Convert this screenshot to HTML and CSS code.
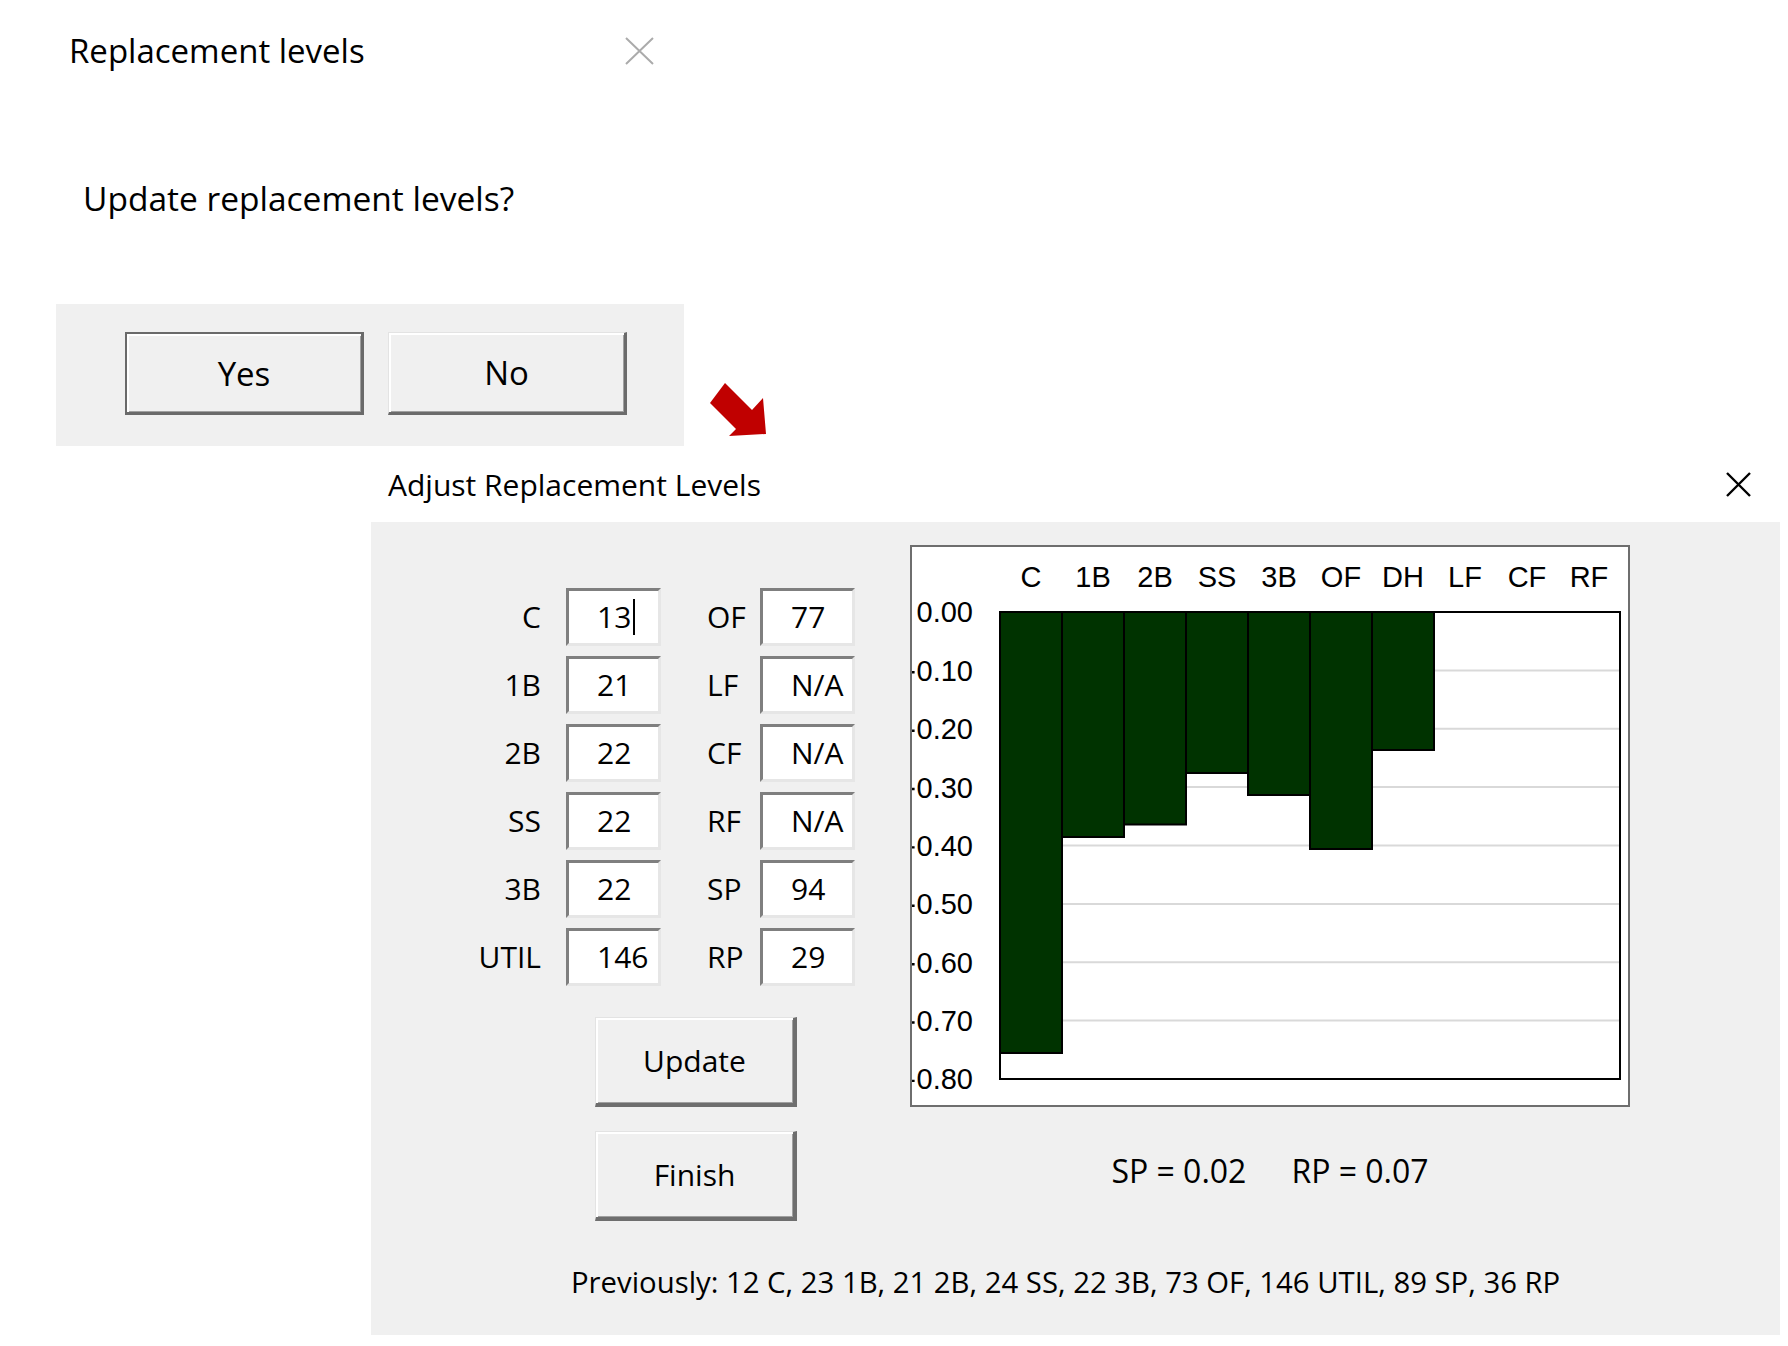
FILE: index.html
```html
<!DOCTYPE html>
<html lang="en">
<head>
<meta charset="utf-8">
<title>Replacement levels</title>
<link rel="stylesheet" href="styles.css">
</head>
<body>
<section class="msgbox">
  <div class="msg-title">
    <span>Replacement levels</span>
    <svg class="close close-light" width="29" height="28" viewBox="0 0 29 28"><path d="M1 1L28 27M28 1L1 27"/></svg>
  </div>
  <p class="msg-text">Update replacement levels?</p>
  <div class="msg-buttons">
    <button class="btn btn-msg btn-default">Yes</button>
    <button class="btn btn-msg">No</button>
  </div>
</section>

<svg class="arrow" width="64" height="60" viewBox="0 0 64 60"><polygon points="19,3 46,30 57,18 60,54 23,56 30,49 4,23"/></svg>

<section class="adjust">
  <div class="adj-title">
    <span>Adjust Replacement Levels</span>
    <svg class="close close-dark" width="25" height="25" viewBox="0 0 25 25"><path d="M1 1L24 24M24 1L1 24"/></svg>
  </div>
  <div class="adj-body">
    <div class="adj-main">
      <div class="left">
        <div class="form">
          <span class="lbl">C</span><span class="field">13<i class="caret"></i></span><span class="lbl lbl2">OF</span><span class="field">77</span>
          <span class="lbl">1B</span><span class="field">21</span><span class="lbl lbl2">LF</span><span class="field">N/A</span>
          <span class="lbl">2B</span><span class="field">22</span><span class="lbl lbl2">CF</span><span class="field">N/A</span>
          <span class="lbl">SS</span><span class="field">22</span><span class="lbl lbl2">RF</span><span class="field">N/A</span>
          <span class="lbl">3B</span><span class="field">22</span><span class="lbl lbl2">SP</span><span class="field">94</span>
          <span class="lbl">UTIL</span><span class="field">146</span><span class="lbl lbl2">RP</span><span class="field">29</span>
        </div>
        <div class="actions">
          <button class="btn btn-act">Update</button>
          <button class="btn btn-act">Finish</button>
        </div>
      </div>
      <div class="right">
        <div class="chart">
          <svg class="plot" width="716" height="558" viewBox="0 0 716 558">
            <g class="col-labels">
              <text x="119" y="40">C</text>
              <text x="181" y="40">1B</text>
              <text x="243" y="40">2B</text>
              <text x="305" y="40">SS</text>
              <text x="367" y="40">3B</text>
              <text x="429" y="40">OF</text>
              <text x="491" y="40">DH</text>
              <text x="553" y="40">LF</text>
              <text x="615" y="40">CF</text>
              <text x="677" y="40">RF</text>
            </g>
            <g class="y-labels">
              <text x="61" y="75.4">0.00</text>
              <text x="61" y="133.8">0.10</text>
              <text x="61" y="192.2">0.20</text>
              <text x="61" y="250.5">0.30</text>
              <text x="61" y="308.9">0.40</text>
              <text x="61" y="367.3">0.50</text>
              <text x="61" y="425.7">0.60</text>
              <text x="61" y="484">0.70</text>
              <text x="61" y="542.4">0.80</text>
            </g>
            <path class="minus" d="M0 125.3H2.6M0 183.7H2.6M0 242H2.6M0 300.4H2.6M0 358.8H2.6M0 417.2H2.6M0 475.5H2.6M0 533.9H2.6"/>
            <rect class="plot-bg" x="88" y="65" width="620" height="467"/>
            <path class="grid" d="M88 123.4H708M88 181.75H708M88 240.1H708M88 298.5H708M88 356.9H708M88 415.25H708M88 473.6H708"/>
            <rect class="plot-frame" x="88" y="65" width="620" height="467"/>
            <rect class="bar" x="88" y="65" width="62" height="441"/>
            <rect class="bar" x="150" y="65" width="62" height="225"/>
            <rect class="bar" x="212" y="65" width="62" height="212.5"/>
            <rect class="bar" x="274" y="65" width="62" height="161"/>
            <rect class="bar" x="336" y="65" width="62" height="183"/>
            <rect class="bar" x="398" y="65" width="62" height="237"/>
            <rect class="bar" x="460" y="65" width="62" height="138"/>
          </svg>
        </div>
        <p class="ratios"><span>SP = 0.02</span><span>RP = 0.07</span></p>
      </div>
    </div>
    <p class="previously">Previously: 12 C, 23 1B, 21 2B, 24 SS, 22 3B, 73 OF, 146 UTIL, 89 SP, 36 RP</p>
  </div>
</section>
</body>
</html>
```

FILE: styles.css
```css
* {
  box-sizing: border-box;
  margin: 0;
  padding: 0;
}

html,
body {
  background: #fff;
}

body {
  width: 1788px;
  height: 1346px;
  overflow: hidden;
  position: relative;
  font-family: "Open Sans", "Noto Sans", sans-serif;
  color: #000;
}

/* ---------- message box ---------- */
.msgbox {
  margin-left: 56px;
  width: 628px;
}

.msg-title {
  display: flex;
  align-items: center;
  justify-content: space-between;
  margin-top: 28px;
  height: 45px;
  padding: 0 30px 0 13px;
  font-size: 33px;
  line-height: 45px;
}

.close {
  display: block;
  fill: none;
}

.close-light {
  stroke: #ababab;
  stroke-width: 2;
}

.close-dark {
  stroke: #000;
  stroke-width: 2.4;
}

.msg-text {
  margin-top: 103px;
  padding-left: 27px;
  font-size: 33.5px;
  line-height: 45px;
}

.msg-buttons {
  margin-top: 83px;
  height: 142px;
  background: #f0f0f0;
  display: flex;
  gap: 24px;
  padding: 28px 0 0 69px;
}

.btn {
  font-family: inherit;
  color: #000;
  background: #f0f0f0;
  display: flex;
  align-items: center;
  justify-content: center;
  border-style: solid;
  cursor: default;
}

.btn-msg {
  width: 239px;
  height: 83px;
  font-size: 33px;
  border-width: 1px 3px 3px 1px;
  border-color: #e3e3e3 #6b6b6b #6b6b6b #e3e3e3;
  box-shadow: inset 2px 2px 0 #fff, inset -1px -1px 0 #a0a0a0;
}

.btn-default {
  border-width: 2px 3px 3px 2px;
  border-color: #6a6a6a;
  box-shadow: inset 2px 2px 0 #fff, inset -1px -1px 0 #a0a0a0;
}

/* ---------- pointer arrow ---------- */
.arrow {
  position: absolute;
  left: 706px;
  top: 380px;
  fill: #c00000;
}

/* ---------- adjust dialog ---------- */
.adjust {
  margin: 18px 0 0 371px;
  width: 1409px;
}

.adj-title {
  display: flex;
  align-items: center;
  justify-content: space-between;
  height: 41px;
  padding: 0 29px 0 17px;
  font-size: 30px;
  line-height: 41px;
}

.adj-body {
  margin-top: 17px;
  height: 813px;
  background: #f0f0f0;
  padding-top: 23px;
}

.adj-main {
  display: flex;
  height: 717px;
}

.left {
  width: 539px;
  padding-top: 43px;
}

.form {
  display: grid;
  grid-template-columns: 195px 95px 99px 95px;
  grid-auto-rows: 58px;
  row-gap: 10px;
  align-items: center;
  font-size: 30px;
}

.lbl {
  text-align: right;
  padding-right: 25px;
  line-height: 40px;
}

.lbl2 {
  text-align: left;
  padding: 0 0 0 46px;
}

.field {
  height: 58px;
  display: flex;
  align-items: center;
  justify-content: flex-start;
  padding-left: 28px;
  background: #fff;
  border: 3px solid;
  border-color: #7f7f7f #e6e6e6 #e6e6e6 #7f7f7f;
  line-height: 40px;
}

.caret {
  display: inline-block;
  width: 2px;
  height: 36px;
  margin-left: 2px;
  background: #000;
}

.actions {
  margin-top: 31px;
  padding-left: 224px;
  display: flex;
  flex-direction: column;
  gap: 24px;
}

.btn-act {
  width: 202px;
  height: 90px;
  font-size: 30px;
  border-width: 1px 4px 4px 1px;
  border-color: #e3e3e3 #6e6e6e #6e6e6e #e3e3e3;
  box-shadow: inset 2px 2px 0 #fff, inset -1px -1px 0 #a0a0a0;
}

.right {
  width: 720px;
}

.chart {
  height: 562px;
  border: 2px solid #6e6e6e;
  background: #fff;
}

.plot {
  display: block;
}

.plot text {
  font-family: "Liberation Sans", Arial, sans-serif;
  font-size: 29px;
  fill: #000;
}

.col-labels text {
  text-anchor: middle;
}

.y-labels text {
  text-anchor: end;
}

.minus {
  stroke: #000;
  stroke-width: 2.4;
  fill: none;
}

.plot-bg {
  fill: #fff;
}

.grid {
  stroke: #d9d9d9;
  stroke-width: 2;
  fill: none;
}

.plot-frame {
  fill: none;
  stroke: #000;
  stroke-width: 2;
}

.bar {
  fill: #003300;
  stroke: #000;
  stroke-width: 2;
}

.ratios {
  margin-top: 42px;
  text-align: center;
  font-size: 32px;
  line-height: 43px;
}

.ratios span + span {
  margin-left: 45px;
}

.previously {
  padding-left: 200px;
  font-size: 29.3px;
  line-height: 41px;
}
```
